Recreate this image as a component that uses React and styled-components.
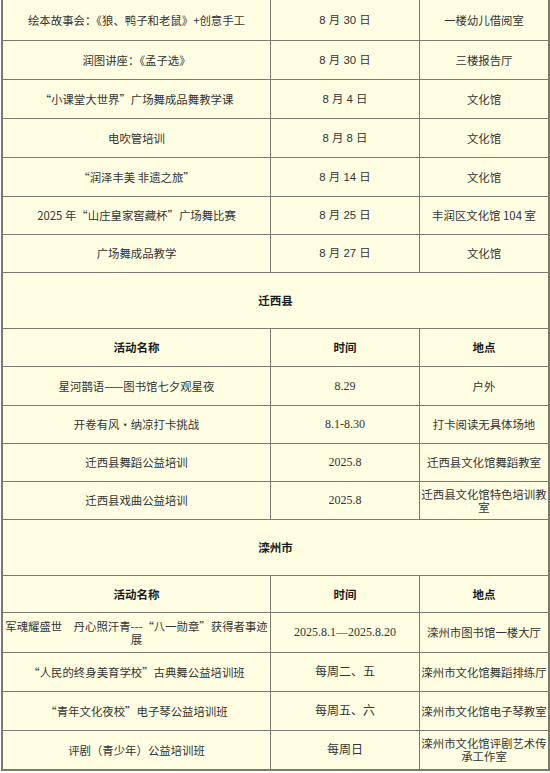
import React from 'react';
import styled, { createGlobalStyle } from 'styled-components';

const GlobalStyle = createGlobalStyle`
  html, body {
    margin: 0;
    padding: 0;
    background: #ffffff;
  }
  body {
    font-family: "Noto Sans CJK SC", sans-serif;
    color: #2e2e2e;
  }
`;

const Page = styled.div`
  width: 550px;
  height: 773px;
  overflow: hidden;
  padding-left: 1px;
  box-sizing: border-box;
`;

const Table = styled.div`
  display: grid;
  grid-template-columns: 268px 149px 129px;
  width: 549px;
  box-sizing: border-box;
  background: #fffee2;
  border-left: 2px solid #7a7a72;
  border-right: 1px solid #7a7a72;
  border-bottom: 1px solid #7a7a72;
`;

const fonts = {
  cjk: '"Noto Sans CJK SC", sans-serif',
  sans: '"Liberation Sans", "Noto Sans CJK SC", sans-serif',
  serif: '"Liberation Serif", "Noto Sans CJK SC", serif',
};

const Cell = styled.div`
  box-sizing: border-box;
  height: ${p => p.$h}px;
  border-right: 1px solid #7a7a72;
  border-bottom: 1px solid #7a7a72;
  display: flex;
  align-items: center;
  justify-content: center;
  text-align: center;
  padding: 0;
  font-family: ${p => fonts[p.$font || 'cjk']};
  font-size: ${p => (p.$font === 'serif' ? 12 : 11.4)}px;
  line-height: 13px;
  color: #333;
  word-break: break-all;
`;

const SectionCell = styled(Cell)`
  grid-column: 1 / -1;
  font-weight: 700;
  font-size: 11.5px;
  color: #1c1c1c;
`;

const HeadCell = styled(Cell)`
  font-weight: 700;
  font-size: 11.5px;
  color: #1c1c1c;
`;

const firstBlock = [
  ['绘本故事会：《狼、鸭子和老鼠》+创意手工', '8 月 30 日', '一楼幼儿借阅室', 41],
  ['润图讲座：《孟子选》', '8 月 30 日', '三楼报告厅', 39],
  ['“小课堂大世界”广场舞成品舞教学课', '8 月 4 日', '文化馆', 39],
  ['电吹管培训', '8 月 8 日', '文化馆', 39],
  ['“润泽丰美 非遗之旅”', '8 月 14 日', '文化馆', 39],
  ['2025 年“山庄皇家窖藏杯”广场舞比赛', '8 月 25 日', '丰润区文化馆 104 室', 38],
  ['广场舞成品教学', '8 月 27 日', '文化馆', 38],
];

const sections = [
  {
    name: '迁西县',
    headH: 38,
    rows: [
      ['星河鹊语——图书馆七夕观星夜', '8.29', '户外', 39],
      ['开卷有风·纳凉打卡挑战', '8.1-8.30', '打卡阅读无具体场地', 38],
      ['迁西县舞蹈公益培训', '2025.8', '迁西县文化馆舞蹈教室', 38],
      ['迁西县戏曲公益培训', '2025.8', '迁西县文化馆特色培训教室', 38],
    ],
  },
  {
    name: '滦州市',
    headH: 37,
    rows: [
      ['军魂耀盛世　丹心照汗青---“八一勋章”获得者事迹展', '2025.8.1—2025.8.20', '滦州市图书馆一楼大厅', 40],
      ['“人民的终身美育学校”古典舞公益培训班', '每周二、五', '滦州市文化馆舞蹈排练厅', 39],
      ['“青年文化夜校”电子琴公益培训班', '每周五、六', '滦州市文化馆电子琴教室', 39],
      ['评剧（青少年）公益培训班', '每周日', '滦州市文化馆评剧艺术传承工作室', 39],
    ],
  },
];

function Row({ cells, timeFont }) {
  const [name, time, place, h] = cells;
  return (
    <>
      <Cell $h={h}>{name}</Cell>
      <Cell $h={h} $font={timeFont}>{time}</Cell>
      <Cell $h={h}>{place}</Cell>
    </>
  );
}

export default function App() {
  return (
    <Page>
      <GlobalStyle />
      <Table>
        {firstBlock.map((r, i) => (
          <Row key={i} cells={r} timeFont="sans" />
        ))}
        {sections.map(sec => (
          <React.Fragment key={sec.name}>
            <SectionCell $h={56}>{sec.name}</SectionCell>
            <HeadCell $h={sec.headH}>活动名称</HeadCell>
            <HeadCell $h={sec.headH}>时间</HeadCell>
            <HeadCell $h={sec.headH}>地点</HeadCell>
            {sec.rows.map((r, i) => (
              <Row key={i} cells={r} timeFont="serif" />
            ))}
          </React.Fragment>
        ))}
      </Table>
    </Page>
  );
}
